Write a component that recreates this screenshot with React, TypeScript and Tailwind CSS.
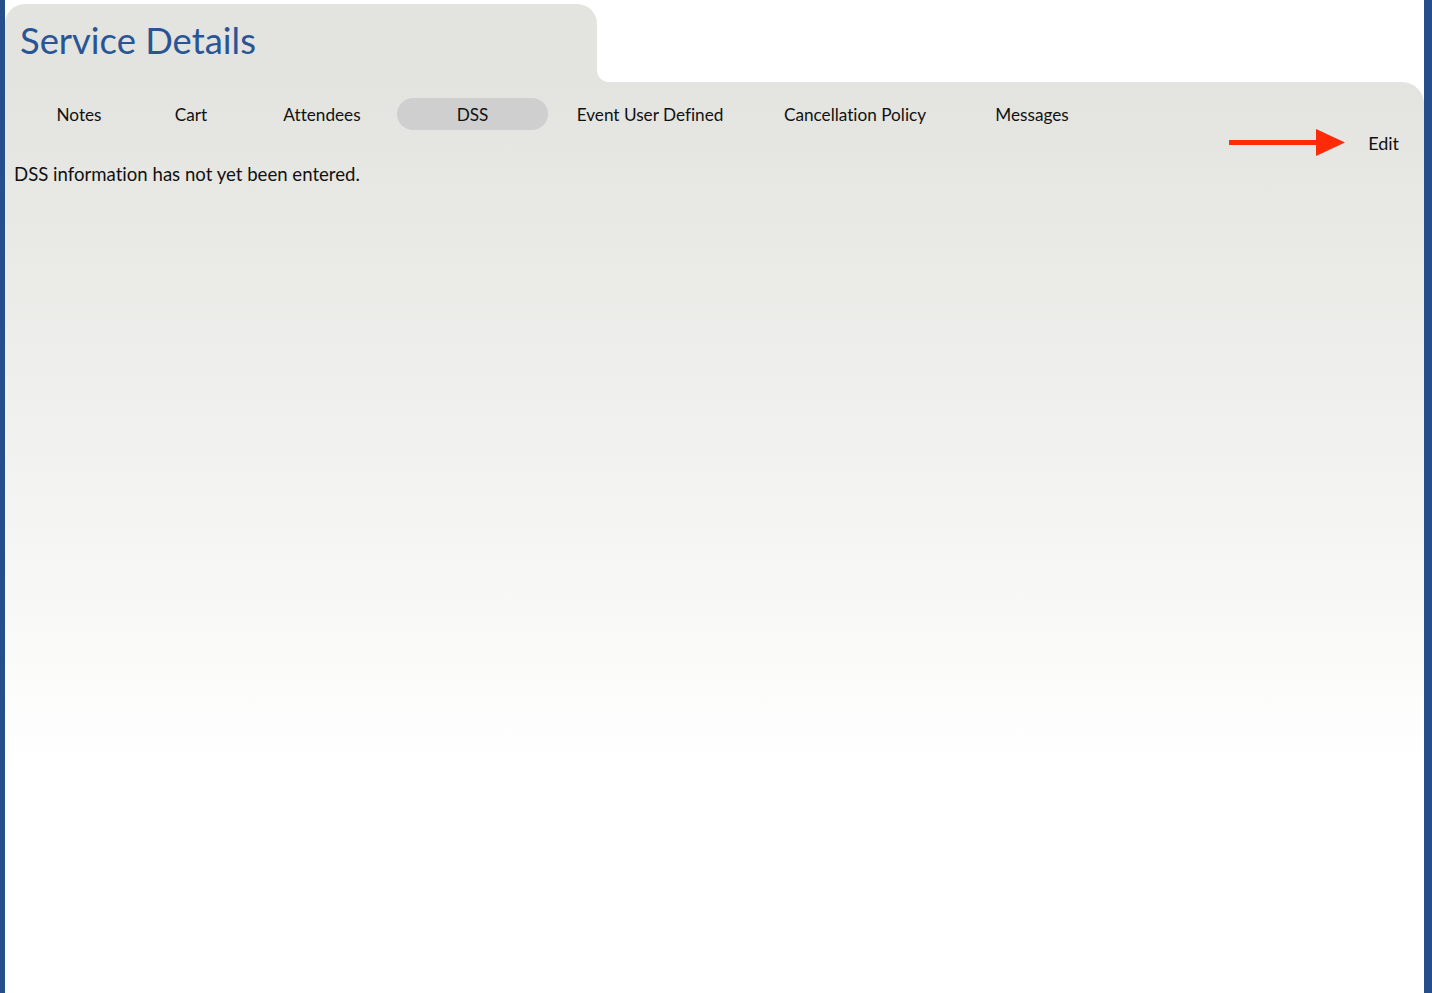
import React from "react";

const tabs = [
  { label: "Notes", width: "w-[112px]" },
  { label: "Cart", width: "w-[112px]" },
  { label: "Attendees", width: "w-[150px]" },
  { label: "DSS", width: "w-[151px]", active: true },
  { label: "Event User Defined", width: "w-[204px]" },
  { label: "Cancellation Policy", width: "w-[206px]" },
  { label: "Messages", width: "w-[148px]" },
];

function Arrow() {
  return (
    <svg width="116" height="28" viewBox="0 0 116 28">
      <rect x="0" y="11" width="90" height="5" fill="#ff2b06" />
      <polygon points="87,0 116,13.5 87,27" fill="#ff2b06" />
    </svg>
  );
}

export default function App() {
  return (
    <div className="flex h-[993px] w-full bg-white font-['Lato','Noto_Sans',sans-serif] text-[#111] [font-variant-ligatures:none]">
      <div className="w-[5px] shrink-0 bg-[#264e8a]" />
      <div className="flex flex-1 flex-col">
        {/* folder tab */}
        <div className="flex h-[82px] shrink-0">
          <div className="mt-[4px] flex w-[592px] items-center rounded-t-[20px] bg-[#e3e3df] pb-[6px] pl-[15px]">
            <h1 className="text-[36.4px] leading-none text-[#2a5595]">Service Details</h1>
          </div>
          <div className="flex-1 bg-[#e3e3df]">
            <div className="h-full w-full rounded-bl-[12px] bg-white" />
          </div>
        </div>

        {/* body */}
        <div className="flex flex-1 flex-col rounded-tr-[22px] bg-gradient-to-b from-[#e3e3df] via-[#f3f3f1] via-45% to-white to-75%">
          <div className="mt-[16px] flex pl-[18px] text-[17.2px]">
            {tabs.map((t) => (
              <div
                key={t.label}
                className={`${t.width} flex h-[32px] items-center justify-center rounded-full pt-[2px] ${t.active ? "bg-[#cfcfcf]" : ""}`}
              >
                {t.label}
              </div>
            ))}
          </div>
          <div className="mt-[-1px] flex items-center justify-end gap-[23px] pr-[25px]">
            <Arrow />
            <span className="text-[18px] leading-[22px]">Edit</span>
          </div>
          <p className="mt-[6px] pl-[9px] text-[18.6px] leading-[22px]">DSS information has not yet been entered.</p>
        </div>
      </div>
      <div className="w-[8px] shrink-0 bg-[#264e8a]" />
    </div>
  );
}
